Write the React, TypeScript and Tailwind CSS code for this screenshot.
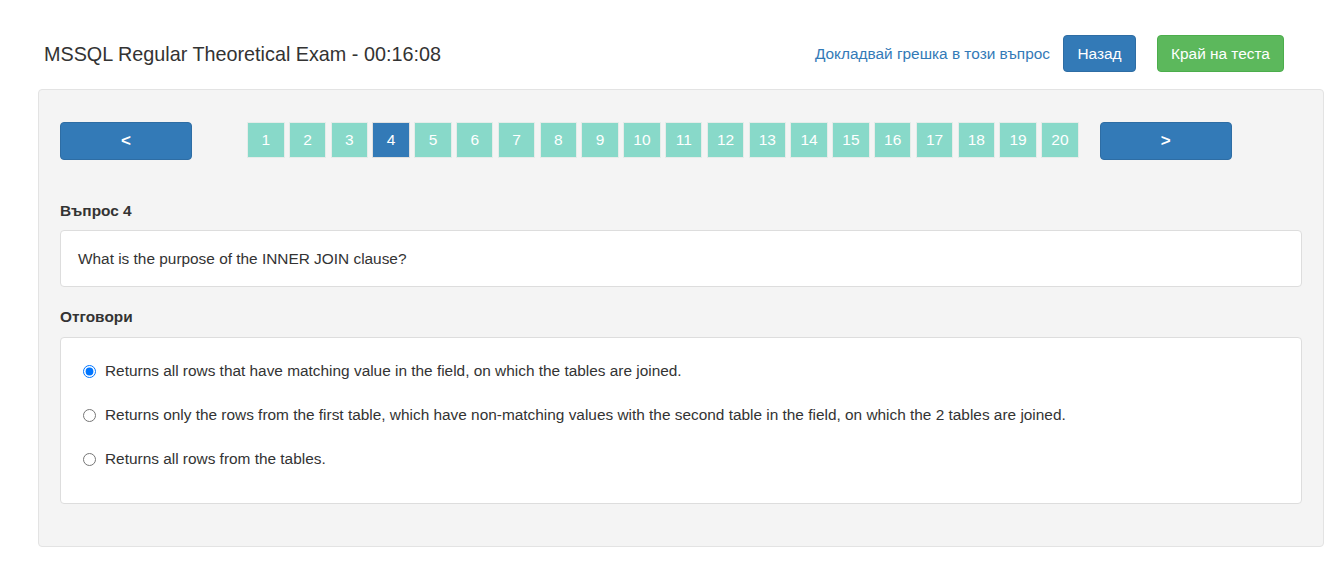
import React from "react";

const answers = [
  "Returns all rows that have matching value in the field, on which the tables are joined.",
  "Returns only the rows from the first table, which have non-matching values with the second table in the field, on which the 2 tables are joined.",
  "Returns all rows from the tables.",
];

export default function App() {
  const pages = Array.from({ length: 20 }, (_, i) => i + 1);
  return (
    <div className="min-h-[577px] bg-white text-[15.4px] text-[#333] font-['Liberation_Sans',Arial,sans-serif]">
      <div className="pl-[38px] pr-[9px] pt-[35px]">
        <div className="flex items-center h-[37px] mb-[17px]">
          <h4 className="ml-[6px] mt-[3px] text-[19.8px] leading-none text-[#333]">MSSQL Regular Theoretical Exam - 00:16:08</h4>
          <div className="ml-auto flex items-center mr-[40px]">
            <a className="text-[#337ab7] text-[15.4px]">Докладвай грешка в този въпрос</a>
            <button className="ml-[13px] h-[37px] w-[73px] rounded-[4px] bg-[#337ab7] border border-[#2e6da4] text-white text-[15.4px]">Назад</button>
            <button className="ml-[21px] h-[37px] w-[127px] rounded-[4px] bg-[#5cb85c] border border-[#4cae4c] text-white text-[15.4px]">Край на теста</button>
          </div>
        </div>
        <div className="bg-[#f4f4f4] border border-[#e3e3e3] rounded-[4px] px-[21px] pt-[32px] pb-[42px]">
          <div className="flex items-start">
            <button className="w-[132px] h-[38px] rounded-[4px] bg-[#337ab7] border border-[#2e6da4] text-white text-[17px] font-bold">&lt;</button>
            <div className="ml-[55px] flex gap-[4.3px]">
              {pages.map((p) => (
                <div
                  key={p}
                  className={
                    p === 4
                      ? "w-[37.5px] h-[36px] flex items-center justify-center bg-[#337ab7] border border-[#e0e0e0] text-white text-[15.5px]"
                      : "w-[37.5px] h-[36px] flex items-center justify-center bg-[#88d9c9] border border-[#e5ece9] text-white text-[15.5px]"
                  }
                >
                  {p}
                </div>
              ))}
            </div>
            <button className="ml-[21px] w-[132px] h-[38px] rounded-[4px] bg-[#337ab7] border border-[#2e6da4] text-white text-[17px] font-bold">&gt;</button>
          </div>
          <div className="mt-[41px] font-bold leading-[20px]">Въпрос 4</div>
          <div className="mt-[9px] h-[57px] bg-white border border-[#ddd] rounded-[4px] flex items-center px-[17px]">
            What is the purpose of the INNER JOIN clause?
          </div>
          <div className="mt-[20px] font-bold leading-[20px]">Отговори</div>
          <div className="mt-[10px] h-[167px] bg-white border border-[#ddd] rounded-[4px] pl-[22px] pt-[23px]">
            {answers.map((a, i) => (
              <label key={i} className="flex items-center h-[20px] mb-[24px]">
                <input type="radio" name="ans" defaultChecked={i === 0} className="m-0 w-[13px] h-[13px] mr-[9px]" />
                <span>{a}</span>
              </label>
            ))}
          </div>
        </div>
      </div>
    </div>
  );
}
